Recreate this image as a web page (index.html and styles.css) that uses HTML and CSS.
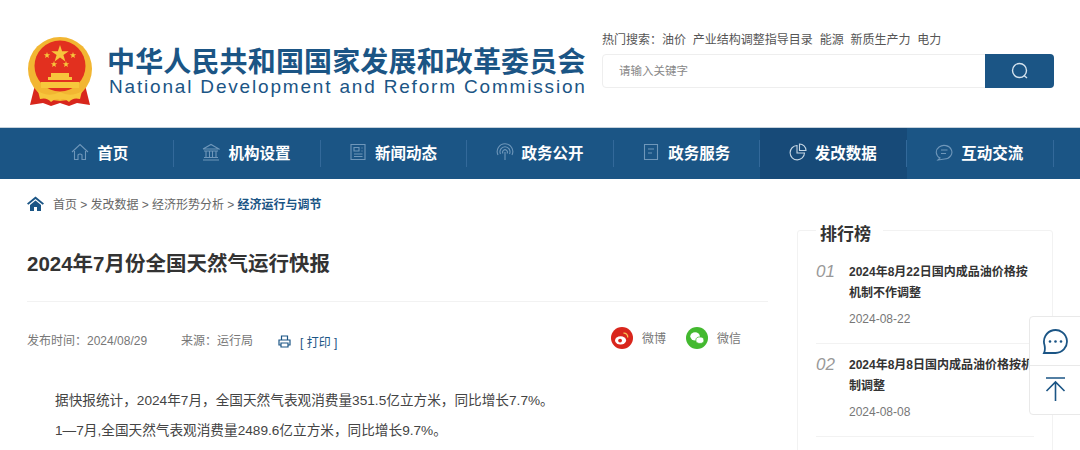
FILE: index.html
```html
<!DOCTYPE html>
<html lang="zh-CN">
<head>
	<meta charset="UTF-8">
	<title>2024年7月份全国天然气运行快报</title>
	<link rel="stylesheet" href="styles.css">
</head>
<body>
	<!-- 头部 -->
	<div class="header">
		<div class="logo">
			<svg class="emblem" width="66" height="70" viewBox="0 0 66 70">
				<path d="M8 48 L3 68 L16 66 L24 69 L33 66 L42 69 L50 66 L63 68 L58 48 Z" fill="#d8261c"/>
				<circle cx="33" cy="32" r="32" fill="#f2b632"/>
				<circle cx="33" cy="29" r="25.500" fill="#e2301f"/>
				<polygon points="33,8 35.100,14.200 41.700,14.200 36.400,18.100 38.400,24.400 33,20.500 27.600,24.400 29.600,18.100 24.300,14.200 30.900,14.200" fill="#f7c63c"/>
				<polygon points="20,15 20.800,17.300 23.200,17.300 21.300,18.800 22,21.100 20,19.700 18,21.100 18.700,18.800 16.800,17.300 19.200,17.300" fill="#f7c63c"/>
				<polygon points="46,15 46.800,17.300 49.200,17.300 47.300,18.800 48,21.100 46,19.700 44,21.100 44.700,18.800 42.800,17.300 45.200,17.300" fill="#f7c63c"/>
				<polygon points="27,24 27.800,26.300 30.200,26.300 28.300,27.800 29,30.100 27,28.700 25,30.100 25.700,27.800 23.800,26.300 26.200,26.300" fill="#f7c63c"/>
				<polygon points="39,24 39.800,26.300 42.200,26.300 40.300,27.800 41,30.100 39,28.700 37,30.100 37.700,27.800 35.800,26.300 38.200,26.300" fill="#f7c63c"/>
				<path d="M24 36 H42 V40 H45 V43 H21 V40 H24 Z" fill="#f7c63c"/>
				<rect x="14" y="45" width="38" height="6" fill="#f7c63c"/>
				<path d="M11 54 Q22 61 33 55 Q44 61 55 54 L53 62 Q46 60 42 65 Q37 60 33 63 Q29 60 24 65 Q20 60 13 62 Z" fill="#f7c63c"/>
			</svg>
			<div class="logo_text">
				<div class="logo_cn">中华人民共和国国家发展和改革委员会</div>
				<div class="logo_en">National Development and Reform Commission</div>
			</div>
		</div>
		<div class="search_con">
			<div class="hot">
				<span>热门搜索：油价</span><span>产业结构调整指导目录</span><span>能源</span><span>新质生产力</span><span>电力</span>
			</div>
			<div class="search">
				<div class="search_input">请输入关键字</div>
				<div class="search_btn">
					<svg width="18" height="18" viewBox="0 0 18 18" fill="none" stroke="#d5e3ee" stroke-width="1.400">
						<circle cx="8.500" cy="8.500" r="7"/>
						<path d="M13 13.500 L16 16"/>
					</svg>
				</div>
			</div>
		</div>
	</div>

	<!-- 导航 -->
	<ul class="nav">
		<li>
			<svg width="18" height="18" viewBox="0 0 18 18"><path d="M1 9 L9 1.500 L17 9 M3.500 8 V16.500 H7 V12 Q9 10 11 12 V16.500 H14.500 V8"/></svg>
			首页
		</li>
		<li>
			<svg width="18" height="18" viewBox="0 0 18 18"><path d="M1 6 L9 1.500 L17 6 H1 M2 8 H16 M4 8 V14 M7.500 8 V14 M10.500 8 V14 M14 8 V14 M2 14.500 H16 M1 17 H17"/></svg>
			机构设置
		</li>
		<li>
			<svg width="18" height="18" viewBox="0 0 18 18"><path d="M2 1.500 H16 V16.500 H2 Z M5 4.500 H10 V8 H5 Z M12.500 5 H13.500 M12.500 8 H13.500 M5 11 H13.500 M5 13.500 H13.500"/></svg>
			新闻动态
		</li>
		<li>
			<svg width="18" height="18" viewBox="0 0 18 18"><path d="M2 12 A7.800 7.800 0 1 1 16 12 M4.500 11 A5 5 0 1 1 13.500 11 M7 10.500 A2.400 2.400 0 1 1 11 10.500 M9 9 V17"/></svg>
			政务公开
		</li>
		<li>
			<svg width="18" height="18" viewBox="0 0 18 18"><path d="M2.500 1.500 H15.500 V16.500 H2.500 Z M6 6 H12 M6 10 H10"/></svg>
			政务服务
		</li>
		<li class="on">
			<svg width="18" height="18" viewBox="0 0 18 18"><path d="M8 2.500 A7.200 7.200 0 1 0 15.500 10 H8 Z M10.500 1 A6.500 6.500 0 0 1 17 7.500 H10.500 Z"/></svg>
			发改数据
		</li>
		<li>
			<svg width="18" height="18" viewBox="0 0 18 18"><path d="M5 15 A7.800 6.800 0 1 1 9.500 16 L3 17 Z M6 7 H12.500 M6 10.500 H11"/></svg>
			互动交流
		</li>
	</ul>

	<div class="main">
		<div class="article">
			<div class="crumb">
				<svg width="17" height="15" viewBox="0 0 17 15"><path d="M8.500 0.500 L17 7.500 L15.700 8.800 L8.500 3 L1.300 8.800 L0 7.500 Z M3 9 L8.500 4.500 L14 9 V15 H10 V11 H7 V15 H3 Z" fill="#1b5585"/></svg>
				<span>首页 &gt; 发改数据 &gt; 经济形势分析 &gt; <b>经济运行与调节</b></span>
			</div>
			<h1>2024年7月份全国天然气运行快报</h1>
			<div class="meta">
				<span class="date">发布时间：2024/08/29</span>
				<span class="source">来源：运行局</span>
				<span class="print">
					<svg width="13" height="13" viewBox="0 0 13 13" fill="none" stroke="#1b5585" stroke-width="1.200"><path d="M3.500 4.500 V1 H9.500 V4.500 M3 10 H1 V5 H12 V10 H10 M3 8 H10 V12 H3 Z"/></svg>
					[ 打印 ]
				</span>
				<div class="share">
					<span class="share_item">
						<svg width="22" height="22" viewBox="0 0 23 23">
							<circle cx="11.500" cy="11.500" r="11.500" fill="#d9261c"/>
							<ellipse cx="10" cy="14" rx="5.800" ry="4.300" fill="#fff"/>
							<circle cx="9.500" cy="14.200" r="2" fill="#d9261c"/>
							<path d="M13 6.500 A4 4 0 0 1 17.500 11" fill="none" stroke="#f6c453" stroke-width="1.300"/>
						</svg>
						微博
					</span>
					<span class="share_item">
						<svg width="22" height="22" viewBox="0 0 23 23">
							<circle cx="11.500" cy="11.500" r="11.500" fill="#43b92f"/>
							<ellipse cx="9.500" cy="9.800" rx="5" ry="4.200" fill="#fff"/>
							<ellipse cx="14.500" cy="13.800" rx="4.200" ry="3.400" fill="#fff" stroke="#43b92f" stroke-width="0.800"/>
						</svg>
						微信
					</span>
				</div>
			</div>
			<p>据快报统计，2024年7月，全国天然气表观消费量351.5亿立方米，同比增长7.7%。</p>
			<p>1—7月,全国天然气表观消费量2489.6亿立方米，同比增长9.7%。</p>
		</div>

		<div class="rank">
			<div class="rank_title">排行榜</div>
			<ul>
				<li>
					<i>01</i>
					<div>
						<a>2024年8月22日国内成品油价格按机制不作调整</a>
						<em>2024-08-22</em>
					</div>
				</li>
				<li>
					<i>02</i>
					<div>
						<a>2024年8月8日国内成品油价格按机制调整</a>
						<em>2024-08-08</em>
					</div>
				</li>
			</ul>
		</div>
	</div>

	<!-- 右侧悬浮按钮 -->
	<div class="float_btns">
		<div class="float_btn">
			<svg width="27" height="27" viewBox="0 0 27 27" fill="none" stroke="#1b5585" stroke-width="1.800">
				<path d="M5 25 H13.500 A11.500 11.500 0 1 0 2.500 17 Q3.500 22 2 25 Z"/>
				<circle cx="8" cy="13.500" r="1.300" fill="#1b5585" stroke="none"/>
				<circle cx="13.500" cy="13.500" r="1.300" fill="#1b5585" stroke="none"/>
				<circle cx="19" cy="13.500" r="1.300" fill="#1b5585" stroke="none"/>
			</svg>
		</div>
		<div class="float_btn top">
			<svg width="21" height="24" viewBox="0 0 21 24" fill="none" stroke="#1b5585" stroke-width="1.600">
				<path d="M1 1 H20 M10.500 24 V5 M1.500 14 L10.500 5 L19.500 14"/>
			</svg>
		</div>
	</div>
</body>
</html>
```

FILE: styles.css
```css
* {
	margin: 0;
	padding: 0;
	box-sizing: border-box;
}

html, body {
	width: 1080px;
	height: 450px;
	overflow: hidden;
}

body {
	position: relative;
	background-color: #fff;
	color: #333;
	font-family: "Liberation Sans", "Noto Sans CJK SC", sans-serif;
}

ul {
	list-style: none;
}

.header {
	height: 127px;
	padding: 30px 26px 0 27px;
	display: flex;
	justify-content: space-between;
}

.logo {
	display: flex;
	align-items: flex-start;
	padding-top: 7px;
}

.logo_text {
	margin: 11px 0 0 14px;
	color: #1b5585;
}

.logo_cn {
	font-size: 28px;
	line-height: 30px;
	font-weight: bold;
	letter-spacing: 0.15px;
	white-space: nowrap;
}

.logo_en {
	margin-left: 2px;
	font-size: 19px;
	line-height: 18px;
	letter-spacing: 1.820px;
	white-space: nowrap;
}

.search_con {
	width: 452px;
}

.hot {
	height: 24px;
	padding-top: 1px;
	font-size: 12px;
	line-height: 19px;
	color: #555;
	display: flex;
	gap: 6.800px;
}

.search {
	height: 34px;
	display: flex;
	border: 1px solid #eee;
	border-radius: 4px;
}

.search_input {
	flex: 1;
	padding-left: 16px;
	font-size: 11.500px;
	line-height: 32px;
	color: #888;
}

.search_btn {
	width: 69px;
	margin: -1px;
	background-color: #1b5585;
	border-radius: 0 4px 4px 0;
	display: flex;
	align-items: center;
	justify-content: center;
}

.nav {
	height: 52px;
	padding: 0 26px 3px 27.500px;
	display: flex;
	background-color: #1b5585;
	border-top: 1px solid #c6d2dc;
}

.nav li {
	width: 146.600px;
	margin-bottom: -3px;
	padding: 0 2px 3px 0;
	display: flex;
	align-items: center;
	justify-content: center;
	gap: 8px;
	color: #fff;
	font-size: 15.500px;
	font-weight: bold;
	position: relative;
}

.nav li::after {
	content: "";
	position: absolute;
	right: 0;
	top: 12px;
	height: 27px;
	border-right: 1px solid #33699a;
}

.nav li.on {
	background-color: #174a78;
}

.nav svg {
	fill: none;
	stroke: #6f97ba;
	stroke-width: 1.100;
}

.nav li.on svg {
	stroke: #c5d6e4;
}

.main {
	height: 271px;
	overflow: hidden;
	display: flex;
	padding: 0 27px;
	justify-content: space-between;
}

.article {
	width: 741px;
}

.crumb {
	height: 48px;
	display: flex;
	align-items: center;
	gap: 9px;
	font-size: 12px;
	letter-spacing: -0.02px;
	color: #666;
}

.crumb b {
	color: #1b5585;
}

h1 {
	height: 75px;
	padding-top: 23px;
	font-size: 20.500px;
	line-height: 28px;
	color: #333;
	border-bottom: 1px solid #f2f2f2;
}

.meta {
	height: 78px;
	padding: 0 27px 3px 0;
	display: flex;
	align-items: center;
	font-size: 12px;
	color: #777;
}

.date {
	width: 154px;
}

.source {
	width: 97px;
}

.print {
	display: flex;
	align-items: center;
	gap: 9px;
	margin-top: 3px;
	color: #1b5585;
}

.share {
	margin-left: auto;
	margin-top: -4px;
	display: flex;
	gap: 20px;
}

.share_item {
	display: flex;
	align-items: center;
	gap: 9px;
}

.article p {
	padding-left: 28px;
	margin-top: 11px;
	font-size: 13.650px;
	line-height: 19px;
	color: #444;
}

.rank {
	width: 256px;
	margin-top: 51px;
	height: 260px;
	flex: none;
	border: 1px solid #f2f2f2;
	border-radius: 3px;
	padding: 0 18px;
	font-size: 12px;
}

.rank_title {
	width: 67px;
	margin: -7px 0 5px 0;
	padding-left: 4px;
	background-color: #fff;
	font-size: 17px;
	line-height: 22px;
	font-weight: bold;
	color: #333;
}

.rank li {
	height: 93px;
	padding-top: 11px;
	display: flex;
	border-bottom: 1px solid #f2f2f2;
}

.rank i {
	width: 33px;
	font-size: 17px;
	line-height: 20px;
	color: #999;
}

.rank li div {
	flex: 1;
}

.rank a {
	display: block;
	font-weight: bold;
	line-height: 21px;
	color: #333;
}

.rank em {
	display: block;
	margin-top: 5px;
	line-height: 20px;
	font-style: normal;
	color: #777;
}

.float_btns {
	position: absolute;
	left: 1029px;
	top: 316px;
	width: 60px;
	background-color: #fff;
	border: 1px solid #e9e9e9;
	border-radius: 4px;
}

.float_btn {
	height: 48px;
	padding-left: 12px;
	display: flex;
	align-items: center;
}

.float_btn.top {
	height: 49px;
	padding: 0 0 3px 15px;
	border-top: 1px solid #e9e9e9;
}
```
